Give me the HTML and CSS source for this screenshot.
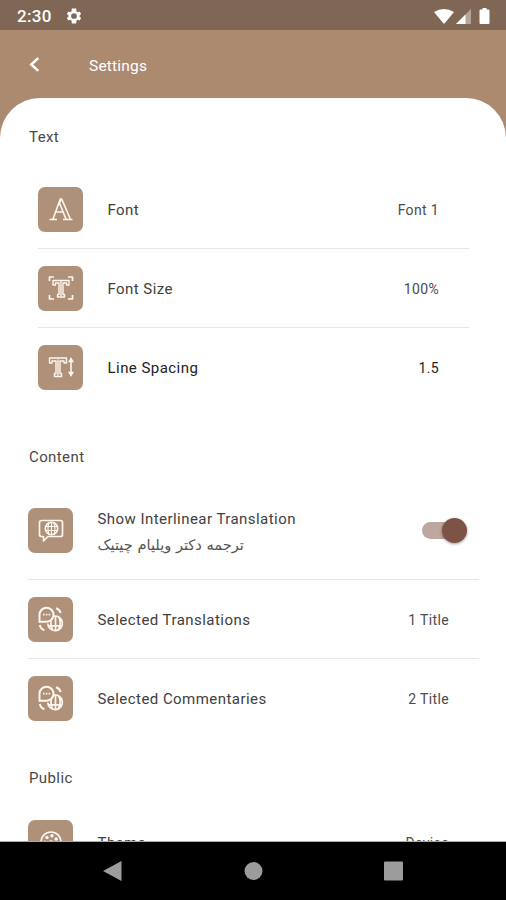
FILE: index.html
```html
<!DOCTYPE html>
<html lang="en">
<head>
<meta charset="utf-8">
<title>Settings</title>
<link rel="stylesheet" href="styles.css">
</head>
<body>
<svg class="defs" width="0" height="0" aria-hidden="true">
  <symbol id="translations" viewBox="0 0 26 26">
    <path d="M1.500 16V8.700a7 7 0 1 1 7 7H1.500z" stroke-width="2"/>
    <path d="M5 8.700h1.600M7.800 8.700h1.600M10.600 8.700h1.600" stroke-width="1.700"/>
    <path d="M15.500 10.200a7.300 7.300 0 1 1-5.700 7.200M17.500 10.500v14M14 12c-1.500 3.500-1.500 7 .3 11.500M20.800 11.200c2 4 2 8-.3 12M10.800 19.800H24.500" stroke-width="1.700"/>
    <path d="M18 2.300c2.500.8 4 2.400 4.600 4.800M1.800 19c.5 2.600 2 4.400 4.600 5.300" stroke-width="2"/>
  </symbol>
</svg>
<div class="screen">
  <header class="status">
    <span class="clock">2:30</span>
    <svg class="gear" viewBox="0 0 24 24"><path d="M19.4 13c.1-.6.1-1.300 0-2l2.100-1.600-2-3.500-2.500 1a8 8 0 0 0-1.700-1L14.900 2h-5.800l-.4 3.900a8 8 0 0 0-1.700 1l-2.500-1-2 3.500L4.600 11c-.1.700-.1 1.400 0 2l-2.100 1.600 2 3.500 2.500-1a8 8 0 0 0 1.700 1l.4 3.900h5.800l.4-3.900a8 8 0 0 0 1.700-1l2.500 1 2-3.500zM12 15.800a3.800 3.800 0 1 1 0-7.600 3.800 3.800 0 0 1 0 7.600z" fill-rule="evenodd"/></svg>
    <svg class="signals" viewBox="0 0 60 20">
      <path d="M0 6Q10 0 20 6L10.500 17.500h-1z"/>
      <path d="M37 3v15H22z" opacity=".42"/><path d="M31.500 8.500V18H22z"/>
      <path d="M48.500 2h4v1.500h2q1 0 1 1V17q0 1-1 1h-8q-1 0-1-1V4.500q0-1 1-1h2z"/>
    </svg>
  </header>
  <div class="appbar">
    <svg class="back" viewBox="0 0 10 14"><path d="M8.500 1L2 7l6.500 6"/></svg>
    <h1>Settings</h1>
  </div>
  <main>
    <h2>Text</h2>
    <section class="inset">
      <div class="row"><span class="tile"><svg viewBox="0 0 26 26"><path d="M1.500 23.500H9M15 23.500h9.500M5 23L12.500 2.500M13.500 2.500L22.300 23M11.500 7L18 23M8.300 16H15M13.500 2.500L10.800 9" stroke-width="1.600"/></svg></span><span class="label">Font</span><span class="value">Font 1</span></div>
      <div class="row"><span class="tile"><svg viewBox="0 0 26 26"><path d="M1.500 6V2H6M20 2h4.500v4M1.500 20v4H6M20 24h4.500v-4" stroke-width="1.700"/><path d="M5 5.500h16v4.500h-2.500V8H15v11.500h1.500V22h-7v-2.500H11V8H7.500v2H5zM13 6v15" stroke-width="1.400"/></svg></span><span class="label">Font Size</span><span class="value">100%</span></div>
      <div class="row"><span class="tile"><svg viewBox="0 0 26 26"><path d="M1.500 4h17v5H16V7h-4v12.500h1.500v3h-7v-3H8V7H4v2H1.500zM10 5.500v16" stroke-width="1.400"/><path d="M23 7v12" stroke-width="1.600"/><path class="solid" d="M23 3L20 8.300h6zM23 23L20 17.700h6z"/></svg></span><span class="label dark">Line Spacing</span><span class="value dark">1.5</span></div>
    </section>
    <h2>Content</h2>
    <section>
      <div class="row tall"><span class="tile"><svg viewBox="0 0 26 26"><path d="M3.500 2.500h19q2 0 2 2v12q0 2-2 2H10L5.500 23v-4.500h-2q-2 0-2-2v-12q0-2 2-2z" stroke-width="1.700"/><circle cx="13.500" cy="10.500" r="6.200" stroke-width="1.600"/><path d="M13.500 4.500v12M7.500 8.500h12M7.500 12.500h12M11 5c-1.500 4-1.500 7 0 11M16 5c1.500 4 1.500 7 0 11" stroke-width="1.100"/></svg></span><span class="label">Show Interlinear Translation<small lang="fa" dir="rtl">ترجمه دکتر ویلیام چیتیک</small></span><span class="switch"><i></i></span></div>
      <div class="row"><span class="tile"><svg><use href="#translations"/></svg></span><span class="label">Selected Translations</span><span class="value">1 Title</span></div>
      <div class="row"><span class="tile"><svg><use href="#translations"/></svg></span><span class="label">Selected Commentaries</span><span class="value">2 Title</span></div>
    </section>
    <h2>Public</h2>
    <section>
      <div class="row"><span class="tile"><svg viewBox="0 0 26 26"><circle cx="13" cy="13" r="10" stroke-width="1.700"/><g class="solid"><circle cx="9" cy="8.500" r="1.700"/><circle cx="14" cy="6.800" r="1.700"/><circle cx="18.200" cy="10" r="1.700"/><circle cx="7" cy="13" r="1.500"/></g><path d="M10 14q3-4 6 0" stroke-width="1.500"/></svg></span><span class="label">Theme</span><span class="value">Device</span></div>
    </section>
  </main>
  <nav>
    <svg viewBox="0 0 506 58"><path d="M103 29L121.500 19v20z"/><circle cx="253.500" cy="29" r="9"/><rect x="384" y="19.500" width="19" height="19" rx="1"/></svg>
  </nav>
</div>
</body>
</html>
```
FILE: styles.css
```css
* { box-sizing: border-box; }
body { margin: 0; font-family: Roboto, "DejaVu Sans", sans-serif; }
.defs { display: block; }
.screen { width: 506px; height: 900px; display: flex; flex-direction: column; overflow: hidden; background: #ab8a70; }
.status { height: 30px; flex: none; display: flex; align-items: center; padding: 1px 11px 0 17px; background: #806755; color: #fff; }
.clock { font-size: 17px; font-weight: 500; letter-spacing: .3px; width: 48px; }
.gear { width: 18px; height: 18px; fill: #fff; }
.signals { width: 60px; height: 20px; margin-left: auto; margin-right: 1px; fill: #fff; }
.appbar { height: 68px; flex: none; display: flex; align-items: center; padding: 2px 0 0 29px; color: #fff; }
.back { width: 11px; height: 15px; fill: none; stroke: #fff; stroke-width: 2.4; position: relative; top: -1px; }
.appbar h1 { margin: 1px 0 0 49px; font-size: 15.500px; font-weight: 400; letter-spacing: .2px; }
main { height: 744px; flex: none; overflow: hidden; background: #fff; border-radius: 40px 40px 0 0; padding-top: 14px; border-bottom: 1px solid #aaa; }
h2 { margin: 0 0 0 29px; height: 50px; line-height: 50px; font-size: 15px; font-weight: 400; letter-spacing: .4px; color: #484848; }
section { margin: 0 27px 15px 28px; }
.inset { margin: 8px 37px 25px 38px; }
.row { height: 79px; display: flex; align-items: center; border-bottom: 1px solid #e6e6e6; padding-right: 30px; }
.row:last-child { border-bottom-color: transparent; }
.tall { height: 98px; padding-right: 12px; }
.tile { width: 45px; height: 45px; flex: none; border-radius: 7px; background: #af9078; display: flex; align-items: center; justify-content: center; }
.tile svg { width: 26px; height: 26px; fill: none; stroke: #fff6ee; stroke-linejoin: round; }
.tile .solid { fill: #fff6ee; stroke: none; }
.label { margin-left: 24.500px; padding-top: 2px; font-size: 15px; letter-spacing: .45px; color: #404040; flex: 1; }
.tall .label { padding-top: 4px; }
.label small { display: block; width: max-content; margin-top: 7px; font-family: "DejaVu Sans", sans-serif; font-size: 14.600px; line-height: 20px; letter-spacing: 0; color: #555; }
.value { padding-top: 2px; font-size: 14px; letter-spacing: .35px; color: #4c4c4c; }
.dark { color: #222; }
.switch { position: relative; width: 45px; height: 26px; display: flex; align-items: center; }
.switch::before { content: ""; width: 38px; height: 17px; border-radius: 9px; background: #bda79e; }
.switch i { position: absolute; right: 0; top: 0; width: 25px; height: 25px; border-radius: 50%; background: #7c5344; box-shadow: 0 1px 3px rgba(0,0,0,.4); }
nav { height: 58px; flex: none; background: #000; }
nav svg { display: block; width: 506px; height: 58px; fill: #9c9c9c; }
```
